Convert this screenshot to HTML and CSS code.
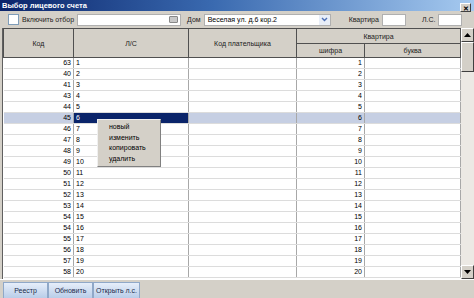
FILE: index.html
```html
<!DOCTYPE html>
<html lang="ru">
<head>
    <meta charset="UTF-8">
    <title>Выбор лицевого счета</title>
    <link rel="stylesheet" href="styles.css">
</head>
<body>
<div class="okno">
    <div class="tytul">
        <span>Выбор лицевого счета</span>
        <span class="zamknij">&#x2715;</span>
    </div>

    <div class="pasek">
        <span class="check"></span>
        <span class="napis">Включить отбор</span>
        <span class="pole pole-filtr"><span class="ikona"></span></span>
        <span class="napis">Дом</span>
        <span class="pole pole-dom">Веселая ул. д.6 кор.2
            <span class="strzalka">
                <svg width="7" height="5" viewBox="0 0 7 5"><path d="M1 1 L3.5 3.5 L6 1" fill="none" stroke="#4d6fb5" stroke-width="1.4"/></svg>
            </span>
        </span>
        <span class="napis napis-kw">Квартира</span>
        <span class="pole pole-male"></span>
        <span class="napis napis-ls">Л.С.</span>
        <span class="pole pole-male"></span>
    </div>

    <div class="srodek">
        <div class="siatka">
            <table>
                <colgroup>
                    <col style="width:70px"><col style="width:115px"><col style="width:108px"><col style="width:68px"><col style="width:96px">
                </colgroup>
                <thead>
                    <tr class="h1">
                        <th rowspan="2">Код</th>
                        <th rowspan="2">Л/С</th>
                        <th rowspan="2">Код плательщика</th>
                        <th colspan="2">Квартира</th>
                    </tr>
                    <tr class="h2">
                        <th>шифра</th>
                        <th>буква</th>
                    </tr>
                </thead>
                <tbody id="wiersze"></tbody>
            </table>

            <div class="menu">
                <div>новый</div>
                <div>изменить</div>
                <div>копировать</div>
                <div>удалить</div>
            </div>
        </div>

        <div class="suwak">
            <div class="przycisk gora">
                <svg width="7" height="4" viewBox="0 0 7 4"><path d="M0 4 L3.5 0 L7 4 Z" fill="#000"/></svg>
            </div>
            <div class="uchwyt"></div>
            <div class="tor"></div>
            <div class="przycisk dol">
                <svg width="7" height="4" viewBox="0 0 7 4"><path d="M0 0 L3.5 4 L7 0 Z" fill="#000"/></svg>
            </div>
        </div>
    </div>

    <div class="stopka">
        <button>Реестр</button>
        <button>Обновить</button>
        <button>Открыть л.с.</button>
    </div>
</div>

<script>
    const kody = [63, 40, 41, 43, 44, 45, 46, 47, 48, 49, 50, 51, 52, 53, 54, 54, 55, 56, 57, 58];
    const tbody = document.getElementById("wiersze");

    for (let i = 0; i < kody.length; i++) {
        let tr = document.createElement("tr");
        if (i === 5) {
            tr.className = "wybrany";
        }
        tr.innerHTML =
            '<td class="num">' + kody[i] + '</td>' +
            '<td class="ls">' + (i + 1) + '</td>' +
            '<td></td>' +
            '<td class="num">' + (i + 1) + '</td>' +
            '<td></td>';
        tbody.appendChild(tr);
    }
</script>
</body>
</html>
```

FILE: styles.css
```css
/* okno wyboru konta */
body {
    margin: 0;
    font-family: 'Liberation Sans', Arial, sans-serif;
    font-size: 7px;
    color: #000;
    background-color: #d4d0c8;
}

.okno {
    width: 474px;
    height: 298px;
    position: relative;
    overflow: hidden;
    background-color: #d4d0c8;
}

.tytul {
    height: 11px;
    display: flex;
    justify-content: space-between;
    align-items: center;
    padding: 0 3px 0 2px;
    background: linear-gradient(to right, #0a246a 0%, #3a6ab0 45%, #a6caf0 100%);
    color: white;
    font-weight: bold;
    font-size: 7.5px;
}

.zamknij {
    width: 11px;
    height: 9px;
    margin-top: 3px;
    background-color: #d4d0c8;
    color: #000;
    font-size: 7px;
    line-height: 9px;
    text-align: center;
    border: 1px solid;
    border-color: #fff #404040 #404040 #fff;
    box-sizing: border-box;
}

.pasek {
    height: 17px;
    display: flex;
    align-items: center;
    padding-left: 8px;
    white-space: nowrap;
}

.check {
    flex: none;
    width: 9px;
    height: 9px;
    background: white;
    border: 1px solid #7f9db9;
    margin-right: 3px;
}

.napis {
    flex: none;
    color: #222;
    margin-right: 3px;
}

.napis-kw {
    margin-left: 14px;
}

.napis-ls {
    margin-left: 12px;
}

.pole {
    flex: none;
    background: white;
    border: 1px solid #b0b0b0;
    display: flex;
    align-items: center;
    margin-right: 4px;
    box-sizing: border-box;
    height: 12px;
}

.pole-filtr {
    width: 104px;
    justify-content: flex-end;
    margin-right: 6px;
}

.ikona {
    width: 7px;
    height: 5px;
    margin-right: 2px;
    background: #c8c8c8;
    border: 1px solid #888;
    border-radius: 1px;
}

.pole-dom {
    width: 127px;
    padding-left: 3px;
    justify-content: space-between;
}

.strzalka {
    width: 11px;
    height: 10px;
    display: flex;
    align-items: center;
    justify-content: center;
    background: #e8eef8;
}

.pole-male {
    width: 24px;
}

.srodek {
    display: flex;
    height: 251px;
    padding-left: 2px;
}

.siatka {
    width: 458px;
    position: relative;
    background: white;
    border-left: 1px solid #606060;
}

table {
    border-collapse: collapse;
    table-layout: fixed;
    width: 457px;
}

th {
    background-color: #d4d0c8;
    font-weight: normal;
    border: 1px solid #505050;
    padding: 0;
    color: #222;
}

.h1 th {
    height: 14px;
}

.h2 th {
    height: 13px;
}

td {
    height: 10px;
    padding: 0 2px;
    border-bottom: 1px solid #dcdcdc;
    border-right: 1px solid #a8a8a8;
    line-height: 10px;
    white-space: nowrap;
}

td.num {
    text-align: right;
}

tr.wybrany td {
    background-color: #c6cfe3;
}

tr.wybrany td.ls {
    background-color: #0a246a;
    color: white;
}

.menu {
    position: absolute;
    left: 94px;
    top: 91px;
    width: 62px;
    padding: 2px 0;
    background: #d4d0c8;
    border: 1px solid;
    border-color: #f0f0f0 #808080 #808080 #f0f0f0;
}

.menu div {
    height: 10.5px;
    line-height: 10.5px;
    padding-left: 11px;
}

.suwak {
    width: 13px;
    display: flex;
    flex-direction: column;
    background: #ece9e4;
}

.przycisk {
    height: 14px;
    display: flex;
    align-items: center;
    justify-content: center;
    background: #d4d0c8;
    border: 1px solid;
    border-color: #fff #404040 #404040 #fff;
    box-sizing: border-box;
}

.uchwyt {
    height: 30px;
    background: #d4d0c8;
    border: 1px solid;
    border-color: #fff #404040 #404040 #fff;
    box-sizing: border-box;
}

.tor {
    flex: 1;
}

.stopka {
    display: flex;
    padding: 2px 0 0 3px;
    border-top: 1px solid #fff;
}

.stopka button {
    width: 45px;
    height: 17px;
    padding: 0;
    font-family: 'Liberation Sans', Arial, sans-serif;
    font-size: 7px;
    color: #1a2a4a;
    background: linear-gradient(#e6eefa, #b9cde8);
    border: 1px solid #8fa8c8;
}

.stopka button:last-child {
    width: 47px;
}
```
